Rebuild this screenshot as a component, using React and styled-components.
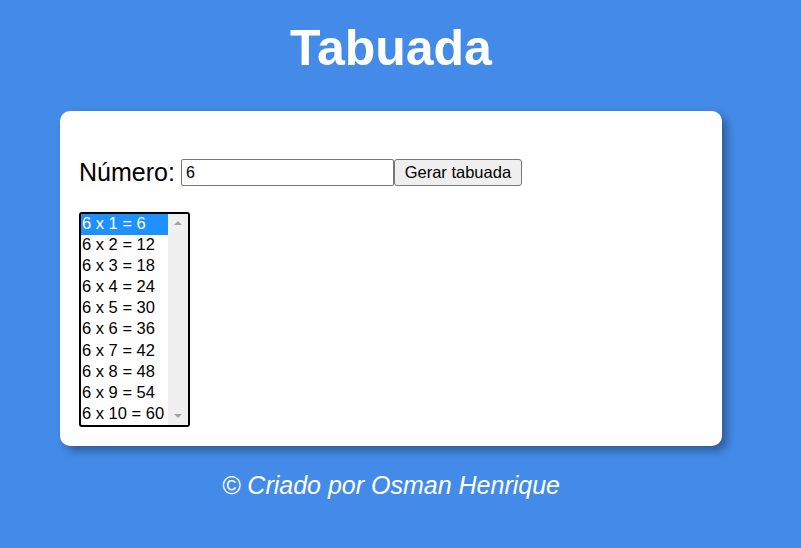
import React, { useState } from "react";
import styled, { createGlobalStyle } from "styled-components";

const GlobalStyle = createGlobalStyle`
  body {
    margin: 0;
    background: #448be9;
    font-family: Arial, "Liberation Sans", sans-serif;
  }
`;

const Page = styled.div`
  width: 782px;
  display: flex;
  flex-direction: column;
  align-items: center;
`;

const Title = styled.h1`
  margin: 20px 0 0 0;
  font-size: 50px;
  line-height: 56px;
  font-weight: bold;
  color: #ffffff;
`;

const Card = styled.section`
  box-sizing: border-box;
  width: 662px;
  height: 335px;
  margin-top: 35px;
  padding: 20px 19px;
  background: #ffffff;
  border-radius: 10px;
  box-shadow: 5px 5px 10px rgba(0, 0, 0, 0.35);
`;

const FormRow = styled.div`
  display: flex;
  align-items: center;
  margin-top: 27px;
  height: 29px;
`;

const Label = styled.label`
  font-size: 25px;
  color: #000;
  margin-right: 6px;
`;

const NumberInput = styled.input`
  box-sizing: border-box;
  width: 213px;
  height: 27px;
  padding: 1px 4px;
  font-size: 16px;
  font-family: inherit;
  border: 1px solid #767676;
  border-radius: 2px;
`;

const Button = styled.button`
  box-sizing: border-box;
  width: 128px;
  height: 27px;
  font-size: 16.5px;
  font-family: inherit;
  color: #000;
  background: #efefef;
  border: 1px solid #767676;
  border-radius: 3px;
  padding: 0 6px;
`;

const ListBox = styled.div`
  box-sizing: border-box;
  margin-top: 25px;
  width: 111px;
  height: 215px;
  border: 2px solid #000;
  border-radius: 3px;
  display: flex;
  overflow: hidden;
`;

const Options = styled.ul`
  list-style: none;
  margin: 0;
  padding: 0;
  flex: 1;
`;

const Option = styled.li`
  height: 21.1px;
  line-height: 18px;
  padding-left: 1px;
  font-size: 16.5px;
  white-space: nowrap;
  color: ${(p) => (p.$selected ? "#ffffff" : "#000")};
  background: ${(p) => (p.$selected ? "#1e90ff" : "transparent")};
`;

const ScrollTrack = styled.div`
  width: 20px;
  background: #f0f0f0;
  display: flex;
  flex-direction: column;
  justify-content: space-between;
  align-items: center;
  padding: 7px 0;
`;

const Arrow = styled.span`
  width: 0;
  height: 0;
  border-left: 4px solid transparent;
  border-right: 4px solid transparent;
  ${(p) =>
    p.$down
      ? "border-top: 4px solid #a3a3a3;"
      : "border-bottom: 4px solid #a3a3a3;"}
`;

const Footer = styled.p`
  margin: 25px 0 0 0;
  font-size: 25px;
  line-height: 28px;
  font-style: italic;
  color: #ffffff;
`;

export default function App() {
  const [num, setNum] = useState("6");
  const [table, setTable] = useState(6);
  const [selected, setSelected] = useState(0);
  const rows = Array.from({ length: 10 }, (_, i) => i + 1);

  return (
    <>
      <GlobalStyle />
      <Page>
        <Title>Tabuada</Title>
        <Card>
          <FormRow>
            <Label htmlFor="numero">Número:</Label>
            <NumberInput
              id="numero"
              type="text"
              value={num}
              onChange={(e) => setNum(e.target.value)}
            />
            <Button onClick={() => setTable(Number(num) || 0)}>Gerar tabuada</Button>
          </FormRow>
          <ListBox role="listbox">
            <Options>
              {rows.map((i, idx) => (
                <Option
                  key={i}
                  $selected={idx === selected}
                  onClick={() => setSelected(idx)}
                >
                  {table} x {i} = {table * i}
                </Option>
              ))}
            </Options>
            <ScrollTrack>
              <Arrow />
              <Arrow $down />
            </ScrollTrack>
          </ListBox>
        </Card>
        <Footer>© Criado por Osman Henrique</Footer>
      </Page>
    </>
  );
}
